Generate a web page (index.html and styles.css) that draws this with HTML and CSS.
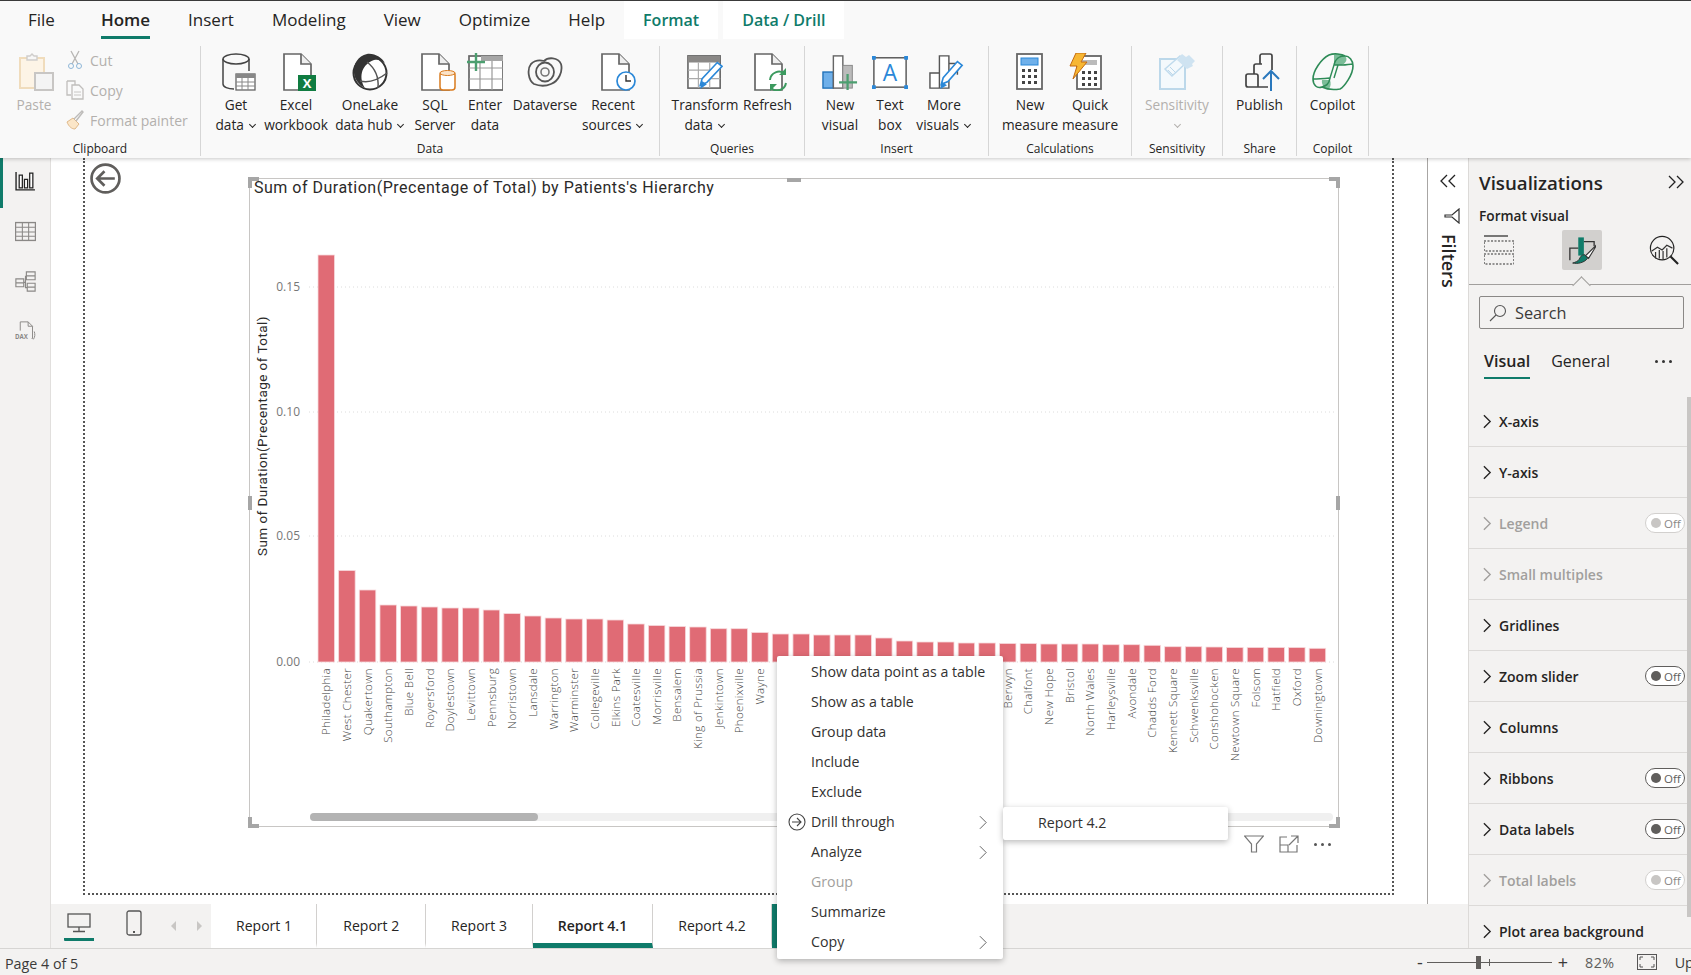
FILE: index.html
```html
<!DOCTYPE html>
<html>
<head>
    <meta charset="UTF-8">
    <title>Report 4.1 - Power BI Desktop</title>
    <link rel="stylesheet" href="styles.css">
</head>
<body>
<header class="ribbon">
    <nav class="tabs">
        <a class="tab tab-file">File</a>
        <a class="tab active">Home</a>
        <a class="tab">Insert</a>
        <a class="tab">Modeling</a>
        <a class="tab">View</a>
        <a class="tab">Optimize</a>
        <a class="tab">Help</a>
        <a class="tab ctx">Format</a>
        <a class="tab ctx ctx-drill">Data / Drill</a>
    </nav>
    <div class="groups">
        <section class="group g-clip">
            <div class="items clip-items">
                <div class="tool off">
                    <svg class="ico nudge" viewBox="0 0 36 38"><rect x="1" y="5" width="24" height="30" fill="#fdf4e6" stroke="#f0dcbc" stroke-width="2"/><path d="M8 5V3h3l2-2 2 2h3v4H8z" fill="#f7f7f7" stroke="#cfcdcb" stroke-width="1.4"/><rect x="16" y="20" width="18" height="17" fill="#f4f4f4" stroke="#c8c6c4" stroke-width="2"/></svg>
                    <span class="lbl">Paste</span>
                </div>
                <div class="mini">
                    <div class="mini-row off"><svg class="ico-s" viewBox="0 0 18 20"><path d="M5 1l7 13M13 1L6 14" fill="none" stroke="#b8b6b4" stroke-width="1.3"/><circle cx="5" cy="16" r="2.5" fill="none" stroke="#8fb7d8"/><circle cx="13" cy="16" r="2.5" fill="none" stroke="#8fb7d8"/></svg>Cut</div>
                    <div class="mini-row off"><svg class="ico-s" viewBox="0 0 18 20"><path d="M1 1h8v4M1 1v14h4" fill="none" stroke="#c0bebc" stroke-width="1.3"/><path d="M6 5h7l4 4v10H6z" fill="none" stroke="#c0bebc" stroke-width="1.3"/><path d="M8 12h7M8 15h7" stroke="#c8c6c4"/></svg>Copy</div>
                    <div class="mini-row off"><svg class="ico-s" viewBox="0 0 18 20"><path d="M1 12l6-4 6 6-4 5c-3 0-6-2-8-7z" fill="#fbe6c8" stroke="#e0b98a"/><path d="M8 9l8-8 1 1-7 9" fill="none" stroke="#bdbbb9" stroke-width="1.4"/></svg>Format painter</div>
                </div>
            </div>
            <div class="group-name">Clipboard</div>
        </section>
        <section class="group g-data">
            <div class="items data-items">
                <div class="tool">
                    <svg class="ico nudge" viewBox="0 0 36 38"><path d="M2 6v25c0 3 5 5 11 5M28 6v12" fill="none" stroke="#444" stroke-width="1.5"/><ellipse cx="15" cy="6" rx="13" ry="5" fill="none" stroke="#444" stroke-width="1.5"/><rect x="15" y="21" width="19" height="16" fill="#fff" stroke="#666" stroke-width="1.3"/><path d="M15 21h19v4H15z" fill="#888"/><path d="M15 29h19M15 33h19M21 25v12M27 25v12" stroke="#888"/></svg>
                    <span class="lbl">Get<br>data <i class="caret"></i></span>
                </div>
                <div class="tool">
                    <svg class="ico nudge" viewBox="0 0 36 38"><path d="M3 1h17l10 10v26H3z" fill="#fff" stroke="#666" stroke-width="1.7"/><path d="M20 1v10h10" fill="#eee" stroke="#666" stroke-width="1.7"/><rect x="17" y="22" width="18" height="16" fill="#107c41"/><text class="ico-x" x="26" y="35">X</text></svg>
                    <span class="lbl">Excel<br>workbook</span>
                </div>
                <div class="tool">
                    <svg class="ico" viewBox="0 0 36 38"><circle cx="18" cy="20" r="16.500" fill="#fff" stroke="#333" stroke-width="2"/><path d="M15 1c-9 2-14 10-13 19 1 7 5 12 11 15C7 26 8 12 22 7c4-1 8 0 11 3-3-5-10-10-18-9z" fill="#333"/><path d="M15 9c9 7 12 15 11 26M8 28c8 2 18-1 27-8" fill="none" stroke="#555" stroke-width="1.500"/></svg>
                    <span class="lbl">OneLake<br>data hub <i class="caret"></i></span>
                </div>
                <div class="tool">
                    <svg class="ico nudge" viewBox="0 0 36 38"><path d="M2 1h17l10 10v26H2z" fill="#fff" stroke="#666" stroke-width="1.7"/><path d="M19 1v10h10" fill="#eee" stroke="#666" stroke-width="1.7"/><rect x="20" y="19" width="15" height="18" rx="3" fill="#fff" stroke="#d97b1e" stroke-width="1.5"/><ellipse cx="27.500" cy="20" rx="7.500" ry="2.500" fill="#fbe3c8" stroke="#d97b1e"/></svg>
                    <span class="lbl">SQL<br>Server</span>
                </div>
                <div class="tool">
                    <svg class="ico" viewBox="0 0 36 38"><rect x="2" y="3" width="34" height="34" fill="#fff" stroke="#666" stroke-width="1.7"/><path d="M14 3h22v5H14z" fill="#a6a6a6"/><path d="M2 15h34M2 26h34M13 8v29M25 8v29" stroke="#999" stroke-width="1.2"/><path d="M9 0v18M0 9h18" stroke="#4c9f70" stroke-width="2.4"/></svg>
                    <span class="lbl">Enter<br>data</span>
                </div>
                <div class="tool">
                    <svg class="ico" viewBox="0 0 36 38"><path d="M7 31C1 27 0 16 4 11c4-4 9-4 13-3 4-4 14-4 17 3 2 7-2 17-10 20-7 3-12 2-17 0z" fill="none" stroke="#555" stroke-width="1.800"/><ellipse cx="18" cy="19" rx="9" ry="9.500" fill="none" stroke="#555" stroke-width="1.800"/><ellipse cx="18" cy="19" rx="4" ry="4" fill="none" stroke="#777" stroke-width="1.600"/></svg>
                    <span class="lbl">Dataverse</span>
                </div>
                <div class="tool">
                    <svg class="ico nudge-far" viewBox="0 0 36 38"><path d="M2 1h17l10 10v26H2z" fill="#fff" stroke="#666" stroke-width="1.7"/><path d="M19 1v10h10" fill="#eee" stroke="#666" stroke-width="1.7"/><circle cx="26" cy="28" r="9" fill="#fff" stroke="#2b88d8" stroke-width="1.7"/><path d="M26 22v6h5" fill="none" stroke="#333" stroke-width="1.4"/></svg>
                    <span class="lbl">Recent<br>sources <i class="caret"></i></span>
                </div>
            </div>
            <div class="group-name">Data</div>
        </section>
        <section class="group g-queries">
            <div class="items query-items">
                <div class="tool">
                    <svg class="ico" viewBox="0 0 38 38"><rect x="1" y="2" width="34" height="34" fill="#fff" stroke="#666" stroke-width="1.7"/><path d="M1 2h34v7H1z" fill="#8a8886"/><path d="M1 17h34M1 26h34M12 9v27M24 9v27" stroke="#aaa" stroke-width="1.2"/><path d="M14 33l2-7 16-17 5 4-16 17z" fill="#fff" stroke="#2b88d8" stroke-width="1.7"/><path d="M14 37l1-9 6 4z" fill="#2b88d8"/></svg>
                    <span class="lbl">Transform<br>data <i class="caret"></i></span>
                </div>
                <div class="tool">
                    <svg class="ico nudge" viewBox="0 0 36 38"><path d="M2 1h17l10 10v26H2z" fill="#fff" stroke="#666" stroke-width="1.7"/><path d="M19 1v10h10" fill="#eee" stroke="#666" stroke-width="1.7"/><path d="M17 27a9 9 0 0 1 15-6M33 30a9 9 0 0 1-15 5" fill="none" stroke="#3c9a5f" stroke-width="2"/><path d="M33 15v7h-7zM17 38v-7h7z" fill="#3c9a5f"/></svg>
                    <span class="lbl">Refresh</span>
                </div>
            </div>
            <div class="group-name">Queries</div>
        </section>
        <section class="group g-insert">
            <div class="items insert-items">
                <div class="tool">
                    <svg class="ico" viewBox="0 0 38 38"><rect x="1" y="19" width="11" height="17" fill="#6fb0ea" stroke="#1c6fb8" stroke-width="1.4"/><rect x="12" y="2" width="10" height="34" fill="#fff" stroke="#666" stroke-width="1.5"/><rect x="22" y="12" width="10" height="24" fill="#bbb" stroke="#888"/><path d="M27 21v17M18 30h19" stroke="#4c9f70" stroke-width="2.4"/></svg>
                    <span class="lbl">New<br>visual</span>
                </div>
                <div class="tool">
                    <svg class="ico" viewBox="0 0 38 38"><rect x="2" y="4" width="34" height="31" fill="#fff" stroke="#555" stroke-width="1.5"/><text class="ico-a" x="19" y="28">A</text><path d="M0 2h4v4H0zM34 2h4v4h-4zM0 33h4v4H0zM34 33h4v4h-4z" fill="#2b88d8"/></svg>
                    <span class="lbl">Text<br>box</span>
                </div>
                <div class="tool">
                    <svg class="ico nudge" viewBox="0 0 38 38"><path d="M1 20h10v16H1zM11 2h10v34H11zM21 10h9v12" fill="#fff" stroke="#555" stroke-width="1.5"/><path d="M13 32l2-7 15-17 5 4-15 17z" fill="#fff" stroke="#2b88d8" stroke-width="1.7"/><path d="M12 37l1-8 6 4z" fill="#2b88d8"/></svg>
                    <span class="lbl">More<br>visuals <i class="caret"></i></span>
                </div>
            </div>
            <div class="group-name">Insert</div>
        </section>
        <section class="group g-calc">
            <div class="items calc-items">
                <div class="tool">
                    <svg class="ico" viewBox="0 0 30 38"><rect x="2" y="1" width="25" height="35" fill="#fff" stroke="#666" stroke-width="1.8"/><rect x="6" y="5" width="17" height="7" fill="#6fb0ea" stroke="#2b88d8"/><path d="M7 16h3v3H7zM13 16h3v3h-3zM19 16h3v3h-3zM7 22h3v3H7zM13 22h3v3h-3zM19 22h3v3h-3zM7 28h3v3H7zM13 28h3v3h-3zM19 28h3v3h-3z" fill="#444"/></svg>
                    <span class="lbl">New<br>measure</span>
                </div>
                <div class="tool">
                    <svg class="ico nudge-left" viewBox="0 0 34 38"><rect x="8" y="3" width="24" height="33" fill="#fff" stroke="#666" stroke-width="1.8"/><rect x="13" y="7" width="15" height="5" fill="#bbb"/><path d="M13 18h3v3h-3zM19 18h3v3h-3zM25 18h3v3h-3zM13 24h3v3h-3zM19 24h3v3h-3zM25 24h3v3h-3zM13 30h3v3h-3zM19 30h3v3h-3zM25 30h3v3h-3z" fill="#444"/><path d="M7 0h10l-5 9h6L4 26l4-13H1z" fill="#f7b733" stroke="#c46a10"/></svg>
                    <span class="lbl">Quick<br>measure</span>
                </div>
            </div>
            <div class="group-name">Calculations</div>
        </section>
        <section class="group g-sens">
            <div class="items sens-items">
                <div class="tool off">
                    <svg class="ico" viewBox="0 0 36 38"><path d="M1 6h25v30H1z" fill="#f4f9fc" stroke="#bcd8ea" stroke-width="2"/><path d="M6 16l7 7 15-14-7-6z" fill="#f4f9fc" stroke="#c0dbed" stroke-width="1.500"/><path d="M23 1l4 3 3-2 6 6-3 3 1 2-6 3-10-9z" fill="#cfe3f1"/><path d="M9 17l5 5M11 14l6 6" stroke="#bcd8ea"/></svg>
                    <span class="lbl">Sensitivity<br><i class="caret"></i></span>
                </div>
            </div>
            <div class="group-name">Sensitivity</div>
        </section>
        <section class="group g-share">
            <div class="items share-items">
                <div class="tool">
                    <svg class="ico nudge" viewBox="0 0 36 38"><path d="M3 21h8a2 2 0 0 1 2 2v11H3a2 2 0 0 1-2-2v-9a2 2 0 0 1 2-2zM9 21v-8a2 2 0 0 1 2-2h6M15 11V3a2 2 0 0 1 2-2h8a2 2 0 0 1 2 2v14M13 34h10" fill="none" stroke="#444" stroke-width="1.700"/><path d="M26 38V19M18 26l8-8 8 8" fill="none" stroke="#2a78bd" stroke-width="2"/></svg>
                    <span class="lbl">Publish</span>
                </div>
            </div>
            <div class="group-name">Share</div>
        </section>
        <section class="group g-copilot">
            <div class="items copilot-items">
                <div class="tool">
                    <svg class="ico ico-wide" viewBox="0 0 42 38"><path d="M22 2c4-2 9-1 11 1 3 3 1 7-3 9h-8z" fill="#7bbd98"/><path d="M10 27h8c1 3 1 6-1 9-4 0-8-4-7-9z" fill="#7bbd98"/><path d="M17 2C9 6 1 18 1 26c0 6 4 10 9 8 4 2 12 3 18 2 4-2 13-14 13-23 0-6-4-10-8-10-3-2-11-3-16-1zM33 3c-3 0-9 0-11 9M10 34c3-1 7-2 8-9M22 12h9c3 0 7-1 10-1M1 26c3 0 6 0 17-1" fill="none" stroke="#2e8b57" stroke-width="1.600"/><path d="M22 12l-4 13M26 12l-4 13" fill="none" stroke="#2e8b57" stroke-width="1.400"/></svg>
                    <span class="lbl">Copilot</span>
                </div>
            </div>
            <div class="group-name">Copilot</div>
        </section>
    </div>
</header>

<main class="main">
    <aside class="rail">
        <div class="rail-btn current"><svg viewBox="0 0 20 20"><path d="M1 1v17h18" fill="none" stroke="#222" stroke-width="1.3"/><path d="M4 4h3v12H4zM9 8h3v8H9zM14 2h3v14h-3z" fill="#fff" stroke="#222" stroke-width="1.2"/></svg></div>
        <div class="rail-btn"><svg viewBox="0 0 20 20"><rect x="0.5" y="1.5" width="19" height="17" fill="none" stroke="#8a8886" stroke-width="1.3"/><path d="M1 6h18M1 10.5h18M1 14.5h18M7 1.5v17M13 1.5v17" stroke="#8a8886"/></svg></div>
        <div class="rail-btn"><svg viewBox="0 0 24 24"><path d="M1 9h9v9H1zM1 13.500h9M13 1h10v9H13zM13 5.500h10M14 14h9v9h-9zM14 18.500h9M10 13h2V6h1M12 13v6h2" fill="none" stroke="#8a8886" stroke-width="1.3"/></svg></div>
        <div class="rail-btn"><svg viewBox="0 0 24 24"><path d="M6 11V1h9l5 5v14h-1M15 1v5h5M22 12c1 3 1 6-1 9" fill="none" stroke="#8a8886" stroke-width="1.1"/><text class="ico-dax" x="0" y="21">DAX</text></svg></div>
    </aside>

    <div class="center">
        <div class="work">
            <div class="canvas">
                <div class="page">
                    <svg class="back" viewBox="0 0 30 30"><circle cx="15" cy="15" r="13.500" fill="#fff" stroke="#605e5c" stroke-width="2.6"/><path d="M24 15H7M14 8l-7 7 7 7" fill="none" stroke="#605e5c" stroke-width="2.6"/></svg>
                    <div class="visual">
                        <svg class="chart" viewBox="0 0 1089 648">
                            <g class="grid">
                                <line x1="60" y1="109" x2="1086" y2="109"/>
                                <line x1="60" y1="234" x2="1086" y2="234"/>
                                <line x1="60" y1="358" x2="1086" y2="358"/>
                                <line x1="60" y1="484" x2="1086" y2="484"/>
                            </g>
                            <g class="ticks">
                                <text x="51" y="113">0.15</text>
                                <text x="51" y="238">0.10</text>
                                <text x="51" y="362">0.05</text>
                                <text x="51" y="488">0.00</text>
                            </g>
                            <text class="ytitle" transform="translate(18,258) rotate(-90)">Sum of Duration(Precentage of Total)</text>
                            <g class="bars">
                                <rect x="69" y="77" width="16.500" height="407"/>
                                <rect x="89.650" y="392.500" width="16.500" height="91.500"/>
                                <rect x="110.300" y="412" width="16.500" height="72"/>
                                <rect x="130.950" y="427" width="16.500" height="57"/>
                                <rect x="151.600" y="428" width="16.500" height="56"/>
                                <rect x="172.250" y="429" width="16.500" height="55"/>
                                <rect x="192.900" y="430" width="16.500" height="54"/>
                                <rect x="213.550" y="430" width="16.500" height="54"/>
                                <rect x="234.200" y="432" width="16.500" height="52"/>
                                <rect x="254.850" y="435.600" width="16.500" height="48.400"/>
                                <rect x="275.500" y="438" width="16.500" height="46"/>
                                <rect x="296.150" y="440" width="16.500" height="44"/>
                                <rect x="316.800" y="441" width="16.500" height="43"/>
                                <rect x="337.450" y="441" width="16.500" height="43"/>
                                <rect x="358.100" y="442" width="16.500" height="42"/>
                                <rect x="378.750" y="446" width="16.500" height="38"/>
                                <rect x="399.400" y="447.500" width="16.500" height="36.500"/>
                                <rect x="420.050" y="448.500" width="16.500" height="35.500"/>
                                <rect x="440.700" y="449" width="16.500" height="35"/>
                                <rect x="461.350" y="450.700" width="16.500" height="33.300"/>
                                <rect x="482" y="450.700" width="16.500" height="33.300"/>
                                <rect x="502.650" y="454.500" width="16.500" height="29.500"/>
                                <rect x="523.300" y="456" width="16.500" height="28"/>
                                <rect x="543.950" y="456" width="16.500" height="28"/>
                                <rect x="564.600" y="457" width="16.500" height="27"/>
                                <rect x="585.250" y="457" width="16.500" height="27"/>
                                <rect x="605.900" y="457" width="16.500" height="27"/>
                                <rect x="626.550" y="460" width="16.500" height="24"/>
                                <rect x="647.200" y="463" width="16.500" height="21"/>
                                <rect x="667.850" y="464" width="16.500" height="20"/>
                                <rect x="688.500" y="464" width="16.500" height="20"/>
                                <rect x="709.150" y="465" width="16.500" height="19"/>
                                <rect x="729.800" y="465" width="16.500" height="19"/>
                                <rect x="750.450" y="465.500" width="16.500" height="18.500"/>
                                <rect x="771.100" y="465.500" width="16.500" height="18.500"/>
                                <rect x="791.750" y="466" width="16.500" height="18"/>
                                <rect x="812.400" y="466" width="16.500" height="18"/>
                                <rect x="833.050" y="466" width="16.500" height="18"/>
                                <rect x="853.700" y="466.700" width="16.500" height="17.300"/>
                                <rect x="874.350" y="466.700" width="16.500" height="17.300"/>
                                <rect x="895" y="467.300" width="16.500" height="16.700"/>
                                <rect x="915.650" y="468.700" width="16.500" height="15.300"/>
                                <rect x="936.300" y="468.700" width="16.500" height="15.300"/>
                                <rect x="956.950" y="469" width="16.500" height="15"/>
                                <rect x="977.600" y="469.500" width="16.500" height="14.500"/>
                                <rect x="998.250" y="469.500" width="16.500" height="14.500"/>
                                <rect x="1018.900" y="469.500" width="16.500" height="14.500"/>
                                <rect x="1039.550" y="469.500" width="16.500" height="14.500"/>
                                <rect x="1060.200" y="470.300" width="16.500" height="13.700"/>
                            </g>
                            <g class="xlabels">
                                <text transform="translate(81,490) rotate(-90)">Philadelphia</text>
                                <text transform="translate(102,490) rotate(-90)">West Chester</text>
                                <text transform="translate(122.500,490) rotate(-90)">Quakertown</text>
                                <text transform="translate(143,490) rotate(-90)">Southampton</text>
                                <text transform="translate(164,490) rotate(-90)">Blue Bell</text>
                                <text transform="translate(184.500,490) rotate(-90)">Royersford</text>
                                <text transform="translate(205,490) rotate(-90)">Doylestown</text>
                                <text transform="translate(226,490) rotate(-90)">Levittown</text>
                                <text transform="translate(246.500,490) rotate(-90)">Pennsburg</text>
                                <text transform="translate(267,490) rotate(-90)">Norristown</text>
                                <text transform="translate(288,490) rotate(-90)">Lansdale</text>
                                <text transform="translate(308.500,490) rotate(-90)">Warrington</text>
                                <text transform="translate(329,490) rotate(-90)">Warminster</text>
                                <text transform="translate(350,490) rotate(-90)">Collegeville</text>
                                <text transform="translate(370.500,490) rotate(-90)">Elkins Park</text>
                                <text transform="translate(391,490) rotate(-90)">Coatesville</text>
                                <text transform="translate(411.500,490) rotate(-90)">Morrisville</text>
                                <text transform="translate(432,490) rotate(-90)">Bensalem</text>
                                <text transform="translate(453,490) rotate(-90)">King of Prussia</text>
                                <text transform="translate(473.500,490) rotate(-90)">Jenkintown</text>
                                <text transform="translate(494,490) rotate(-90)">Phoenixville</text>
                                <text transform="translate(515,490) rotate(-90)">Wayne</text>
                                <text transform="translate(762.500,490) rotate(-90)">Berwyn</text>
                                <text transform="translate(783,490) rotate(-90)">Chalfont</text>
                                <text transform="translate(804,490) rotate(-90)">New Hope</text>
                                <text transform="translate(824.500,490) rotate(-90)">Bristol</text>
                                <text transform="translate(845,490) rotate(-90)">North Wales</text>
                                <text transform="translate(866,490) rotate(-90)">Harleysville</text>
                                <text transform="translate(886.500,490) rotate(-90)">Avondale</text>
                                <text transform="translate(907,490) rotate(-90)">Chadds Ford</text>
                                <text transform="translate(928,490) rotate(-90)">Kennett Square</text>
                                <text transform="translate(948.500,490) rotate(-90)">Schwenksville</text>
                                <text transform="translate(969,490) rotate(-90)">Conshohocken</text>
                                <text transform="translate(990,490) rotate(-90)">Newtown Square</text>
                                <text transform="translate(1010.500,490) rotate(-90)">Folsom</text>
                                <text transform="translate(1031,490) rotate(-90)">Hatfield</text>
                                <text transform="translate(1052,490) rotate(-90)">Oxford</text>
                                <text transform="translate(1072.500,490) rotate(-90)">Downingtown</text>
                            </g>
                            <rect class="sb-track" x="61" y="635" width="1023" height="8" rx="4"/>
                            <rect class="sb-thumb" x="61" y="635" width="228" height="8" rx="4"/>
                        </svg>
                        <div class="visual-title">Sum of Duration(Precentage of Total) by Patients's Hierarchy</div>
                        <i class="corner tl"></i><i class="corner tr"></i><i class="corner bl"></i><i class="corner br"></i>
                        <i class="grip grip-top"></i><i class="grip grip-left"></i><i class="grip grip-right"></i>
                        <div class="visual-tools">
                            <svg viewBox="0 0 20 18"><path d="M0.500 1h19l-7 8v8h-5V9z" fill="none" stroke="#777" stroke-width="1.2"/></svg>
                            <svg viewBox="0 0 20 18"><path d="M8 2H1v15h17v-7M1 10h8v7M12 1h7v7M19 1l-9 9" fill="none" stroke="#777" stroke-width="1.2"/></svg>
                            <span class="dots"><i></i><i></i><i></i></span>
                        </div>
                    </div>
                </div>
            </div>
            <aside class="filters">
                <svg class="dbl" viewBox="0 0 16 14"><path d="M7 1L1 7l6 6M15 1L9 7l6 6" fill="none" stroke="#222" stroke-width="1.3"/></svg>
                <svg class="funnel" viewBox="0 0 16 16"><path d="M15 1v14L8 9H1V7h7z" fill="none" stroke="#333" stroke-width="1.2"/></svg>
                <div class="filters-label">Filters</div>
            </aside>
        </div>
        <div class="pagebar">
            <div class="view-icons">
                <div class="vi vi-desk"><svg viewBox="0 0 24 20"><rect x="1" y="1" width="22" height="13" fill="none" stroke="#555" stroke-width="1.3"/><path d="M12 14v4M6 18.500h12" stroke="#555" stroke-width="1.3"/></svg></div>
                <div class="vi vi-phone"><svg viewBox="0 0 16 26"><rect x="1" y="1" width="14" height="24" rx="2" fill="none" stroke="#555" stroke-width="1.3"/><path d="M7 21h2v2H7z" fill="#555"/></svg></div>
                <i class="arr arr-l"></i><i class="arr arr-r"></i>
            </div>
            <div class="pages">
                <a class="pg">Report 1</a>
                <a class="pg">Report 2</a>
                <a class="pg">Report 3</a>
                <a class="pg cur">Report 4.1</a>
                <a class="pg">Report 4.2</a>
                <a class="pg pg-drill"></a>
            </div>
        </div>
    </div>

    <aside class="viz">
        <div class="viz-head">
            <h2>Visualizations</h2>
            <svg class="dbl" viewBox="0 0 16 14"><path d="M1 1l6 6-6 6M9 1l6 6-6 6" fill="none" stroke="#222" stroke-width="1.3"/></svg>
        </div>
        <div class="viz-sub">Format visual</div>
        <div class="viz-modes">
            <svg class="mode" viewBox="0 0 30 30"><path d="M0 1h24" stroke="#333" stroke-width="1.3"/><path d="M0 6h30v10H0zM0 19h30v10H0z" fill="none" stroke="#333" stroke-width="1.2" stroke-dasharray="2 1.500"/></svg>
            <div class="mode-on"><svg viewBox="0 0 30 30"><path d="M11 1.500h6V21h-6z" fill="#107c6a"/><path d="M2 26V13h9M17 6h11v5" fill="none" stroke="#333" stroke-width="1.4"/><path d="M30 10L19 21l3 3 8-13z" fill="#fff" stroke="#333" stroke-width="1.2"/><path d="M5 29c5 1 12 0 16-5l-3-4c-4 0-5 3-6 5-1 2-4 3-7 4z" fill="#107c6a" stroke="#333"/></svg></div>
            <svg class="mode" viewBox="0 0 32 32"><circle cx="14" cy="14" r="12.500" fill="none" stroke="#222" stroke-width="1.3"/><path d="M3 17l6-4 5 3 5-5 6 3" fill="none" stroke="#333" stroke-width="1.3"/><path d="M7 18v7M11 16v9M15 17v9M19 14v10" stroke="#333" stroke-width="1.3"/><path d="M23 23l8 8" stroke="#222" stroke-width="2.2"/></svg>
        </div>
        <div class="notch"></div>
        <div class="viz-search">
            <svg viewBox="0 0 18 18"><circle cx="11" cy="7" r="5.500" fill="none" stroke="#555" stroke-width="1.1"/><path d="M7 11l-6 6" stroke="#555" stroke-width="1.1"/></svg>
            <span>Search</span>
        </div>
        <div class="viz-tabs">
            <a class="vt on">Visual</a>
            <a class="vt">General</a>
            <span class="vt-more"><i></i><i></i><i></i></span>
        </div>
        <div class="cards">
            <div class="card"><svg class="chev" viewBox="0 0 10 16"><path d="M1 1l7 7-7 7"/></svg>X-axis</div>
            <div class="card"><svg class="chev" viewBox="0 0 10 16"><path d="M1 1l7 7-7 7"/></svg>Y-axis</div>
            <div class="card dim"><svg class="chev" viewBox="0 0 10 16"><path d="M1 1l7 7-7 7"/></svg>Legend<span class="toggle"><i></i>Off</span></div>
            <div class="card dim"><svg class="chev" viewBox="0 0 10 16"><path d="M1 1l7 7-7 7"/></svg>Small multiples</div>
            <div class="card"><svg class="chev" viewBox="0 0 10 16"><path d="M1 1l7 7-7 7"/></svg>Gridlines</div>
            <div class="card"><svg class="chev" viewBox="0 0 10 16"><path d="M1 1l7 7-7 7"/></svg>Zoom slider<span class="toggle"><i></i>Off</span></div>
            <div class="card"><svg class="chev" viewBox="0 0 10 16"><path d="M1 1l7 7-7 7"/></svg>Columns</div>
            <div class="card"><svg class="chev" viewBox="0 0 10 16"><path d="M1 1l7 7-7 7"/></svg>Ribbons<span class="toggle"><i></i>Off</span></div>
            <div class="card"><svg class="chev" viewBox="0 0 10 16"><path d="M1 1l7 7-7 7"/></svg>Data labels<span class="toggle"><i></i>Off</span></div>
            <div class="card dim"><svg class="chev" viewBox="0 0 10 16"><path d="M1 1l7 7-7 7"/></svg>Total labels<span class="toggle"><i></i>Off</span></div>
            <div class="card"><svg class="chev" viewBox="0 0 10 16"><path d="M1 1l7 7-7 7"/></svg>Plot area background</div>
        </div>
        <div class="viz-scroll"></div>
    </aside>
</main>

<footer class="status">
    <span class="page-of">Page 4 of 5</span>
    <div class="zoom">
        <span class="zm">-</span>
        <div class="slider"><i class="thumb"></i><i class="mid"></i></div>
        <span class="zm">+</span>
        <span class="pct">82%</span>
        <svg class="fit" viewBox="0 0 20 16"><rect x="0.500" y="0.500" width="19" height="15" fill="none" stroke="#555"/><path d="M3 6V3h3M14 3h3v3M17 10v3h-3M6 13H3v-3" fill="none" stroke="#555"/></svg>
        <span class="up">Up</span>
    </div>
</footer>

<div class="menu">
    <div class="mi">Show data point as a table</div>
    <div class="mi">Show as a table</div>
    <div class="mi">Group data</div>
    <div class="mi">Include</div>
    <div class="mi">Exclude</div>
    <div class="mi"><svg class="mi-ico" viewBox="0 0 18 18"><circle cx="9" cy="9" r="8" fill="none" stroke="#444" stroke-width="1.1"/><path d="M4 9h9M9 5l4 4-4 4" fill="none" stroke="#444" stroke-width="1.1"/></svg>Drill through<svg class="mi-chev" viewBox="0 0 10 16"><path d="M1 1l7 7-7 7"/></svg></div>
    <div class="mi">Analyze<svg class="mi-chev" viewBox="0 0 10 16"><path d="M1 1l7 7-7 7"/></svg></div>
    <div class="mi dis">Group</div>
    <div class="mi">Summarize</div>
    <div class="mi">Copy<svg class="mi-chev" viewBox="0 0 10 16"><path d="M1 1l7 7-7 7"/></svg></div>
</div>
<div class="submenu">Report 4.2</div>
</body>
</html>
```

FILE: styles.css
```css
* {
    margin: 0;
    padding: 0;
    box-sizing: border-box;
}
body {
    width: 1691px;
    height: 975px;
    overflow: hidden;
    display: flex;
    flex-direction: column;
    font-family: "Open Sans", "Noto Sans", sans-serif;
    color: #252423;
    background: #f3f2f1;
    position: relative;
}

/* ribbon */
.ribbon {
    height: 158px;
    flex: none;
    background: #f9f9f9;
    border-top: 1px solid #3a3a3a;
    box-shadow: 0 1px 4px rgba(0,0,0,.22);
    position: relative;
    z-index: 3;
}
.tabs {
    display: flex;
    height: 38px;
    padding-left: 9px;
}
.tab {
    padding: 2px 19px 0;
    font-size: 17px;
    line-height: 34px;
    white-space: nowrap;
}
.tab-file {
    margin-right: 8px;
}
.tab.active {
    font-weight: 600;
    position: relative;
}
.tab.active:after {
    content: "";
    position: absolute;
    left: 19px;
    right: 19px;
    bottom: 0;
    height: 3px;
    background: #0f7b6a;
}
.tab.ctx {
    background: #fff;
    color: #0f7b6a;
    font-weight: 600;
    font-size: 16px;
}
.ctx-drill {
    margin-left: 5px;
}
.groups {
    display: flex;
    margin-top: 7px;
    height: 110px;
}
.group {
    border-right: 1px solid #d6d6d6;
    display: flex;
    flex-direction: column;
}
.g-clip { width: 201px; }
.g-data { width: 459px; }
.g-queries { width: 145px; }
.g-insert { width: 184px; }
.g-calc { width: 143px; }
.g-sens { width: 91px; }
.g-share { width: 74px; }
.g-copilot { width: 72px; }
.items {
    display: grid;
    height: 96px;
}
.clip-items { grid-template-columns: 64px 1fr; padding-left: 2px; }
.data-items { grid-template-columns: 60px 60px 88px 42px 58px 62px 74px; padding-left: 5px; }
.query-items { grid-template-columns: 90px 35px; }
.insert-items { grid-template-columns: 70px 30px 78px; }
.calc-items { grid-template-columns: 82px 38px; }
.sens-items, .share-items, .copilot-items { grid-template-columns: 1fr; }
.tool {
    display: flex;
    flex-direction: column;
    align-items: center;
    padding-top: 7px;
    font-size: 13.700px;
    line-height: 20px;
    white-space: nowrap;
}
.ico {
    width: 36px;
    height: 38px;
    margin-bottom: 4px;
    flex: none;
}
.ico-wide {
    width: 42px;
}
.nudge {
    margin-left: 6px;
}
.nudge-far {
    margin-left: 10px;
}
.nudge-left {
    margin-right: 8px;
}
.lbl {
    text-align: center;
}
.off {
    color: #b3b0ad;
}
.caret {
    display: inline-block;
    width: 5px;
    height: 5px;
    border-right: 1.3px solid currentColor;
    border-bottom: 1.3px solid currentColor;
    transform: rotate(45deg);
    margin: 0 2px 3px 2px;
}
.group-name {
    text-align: center;
    font-size: 12px;
    line-height: 14px;
    margin-top: 1px;
}
.mini {
    margin-top: -1px;
    font-size: 14px;
}
.mini-row {
    display: flex;
    align-items: center;
    height: 30px;
    gap: 6px;
    white-space: nowrap;
}
.ico-s {
    width: 18px;
    height: 20px;
    flex: none;
}
.ico-x, .ico-a, .ico-dax {
    font-family: "Open Sans", sans-serif;
    text-anchor: middle;
}
.ico-x {
    fill: #fff;
    font-size: 13px;
    font-weight: 700;
}
.ico-a {
    fill: #2b88d8;
    font-size: 24px;
}
.ico-dax {
    fill: #8a8886;
    font-size: 7px;
    font-weight: 700;
    text-anchor: start;
}

/* main area */
.main {
    flex: 1;
    display: flex;
    min-height: 0;
}
.rail {
    width: 51px;
    flex: none;
    background: #f3f2f1;
    border-right: 1px solid #e1dfdd;
}
.rail-btn {
    height: 50px;
    display: flex;
    align-items: center;
    justify-content: center;
}
.rail-btn svg {
    width: 21px;
    height: 21px;
    margin-top: -3px;
}
.rail-btn.current {
    border-left: 3px solid #0f7b6a;
    padding-right: 3px;
}
.center {
    width: 1417px;
    flex: none;
    display: flex;
    flex-direction: column;
}
.work {
    flex: 1;
    display: flex;
    min-height: 0;
}
.canvas {
    width: 1376px;
    background: #fff;
    padding-left: 32px;
    padding-bottom: 9px;
}
.page {
    width: 1311px;
    height: 100%;
    border: 2px dotted #555;
    border-top: 0;
    position: relative;
}
.back {
    position: absolute;
    left: 5px;
    top: 5px;
    width: 31px;
    height: 31px;
}
.visual {
    position: absolute;
    left: 164px;
    top: 20px;
    width: 1090px;
    height: 649px;
    border: 1.5px solid #c8c6c4;
}
.chart {
    display: block;
    position: absolute;
    left: -1.5px;
    top: -1.5px;
    width: 1089px;
    height: 648px;
    font-family: "Open Sans", sans-serif;
}
.visual-title {
    position: absolute;
    left: 4px;
    top: -1px;
    font: 16px/20px Roboto, sans-serif;
    letter-spacing: .5px;
    color: #2b2a29;
    white-space: nowrap;
}
.grid line {
    stroke: #dcdcdc;
    stroke-dasharray: 1 3;
}
.ticks text {
    font-size: 12px;
    fill: #777;
    text-anchor: end;
}
.ytitle {
    font: 13.500px Roboto, sans-serif;
    letter-spacing: .45px;
    fill: #2b2a29;
    text-anchor: middle;
}
.bars rect {
    fill: #e06b75;
    stroke: #f7d9dc;
    stroke-width: .8;
}
.xlabels text {
    font-size: 11.500px;
    font-weight: 300;
    fill: #444;
    text-anchor: end;
    letter-spacing: .35px;
}
.sb-track {
    fill: #f0f0f0;
}
.sb-thumb {
    fill: #b3b3b3;
}
.corner {
    position: absolute;
    width: 11px;
    height: 11px;
    border: 0 solid #a6a6a6;
}
.corner.tl { left: -2px; top: -2px; border-width: 4px 0 0 4px; }
.corner.tr { right: -2px; top: -2px; border-width: 4px 4px 0 0; }
.corner.bl { left: -2px; bottom: -2px; border-width: 0 0 4px 4px; }
.corner.br { right: -2px; bottom: -2px; border-width: 0 4px 4px 0; }
.grip {
    position: absolute;
    background: #a6a6a6;
}
.grip-top { left: 537px; top: -1px; width: 14px; height: 4px; }
.grip-left { left: -2px; top: 317px; width: 4px; height: 14px; }
.grip-right { right: -2px; top: 317px; width: 4px; height: 14px; }
.visual-tools {
    position: absolute;
    right: 5px;
    bottom: -27px;
    display: flex;
    align-items: center;
    gap: 15px;
}
.visual-tools svg {
    width: 20px;
    height: 18px;
}
.dots {
    display: flex;
    gap: 4px;
    width: 19px;
}
.dots i, .vt-more i {
    display: block;
    width: 3px;
    height: 3px;
    border-radius: 50%;
    background: #555;
}

/* filters strip */
.filters {
    flex: 1;
    background: #fff;
    border-left: 1px solid #a8a6a4;
    position: relative;
    display: flex;
    flex-direction: column;
    align-items: center;
    padding-top: 16px;
}
.filters .dbl {
    width: 16px;
    height: 14px;
}
.filters .funnel {
    width: 16px;
    height: 16px;
    margin: 20px 0 0 8px;
}
.filters-label {
    writing-mode: vertical-rl;
    font-size: 18px;
    font-weight: 600;
    line-height: 20px;
    margin: 10px 0 0 2px;
}

/* page tabs */
.pagebar {
    height: 44px;
    flex: none;
    display: flex;
    background: #f3f2f1;
}
.view-icons {
    width: 160px;
    position: relative;
    display: flex;
    padding-left: 13px;
}
.vi {
    display: flex;
    justify-content: center;
}
.vi-desk {
    width: 30px;
    height: 37px;
    padding-top: 9px;
    border-bottom: 3px solid #0f7b6a;
    border-bottom-left-radius: 1px;
}
.vi-desk svg {
    width: 24px;
    height: 20px;
}
.vi-phone {
    margin-left: 32px;
    padding-top: 6px;
}
.vi-phone svg {
    width: 16px;
    height: 26px;
}
.arr {
    position: absolute;
    top: 17px;
    border: 5px solid transparent;
}
.arr-l { left: 115px; border-right: 5px solid #c8c6c4; }
.arr-r { left: 146px; border-left: 5px solid #c8c6c4; }
.pages {
    display: flex;
    background: #fff;
}
.pg {
    display: flex;
    align-items: center;
    justify-content: center;
    border-right: 1px solid #d2d0ce;
    width: 106px;
    font-size: 14px;
    border-bottom: 5px solid transparent;
    padding: 3px 0 0 1px;
}
.pg:nth-child(2) { width: 108.500px; }
.pg:nth-child(3) { width: 107px; }
.pg.cur {
    width: 120px;
    font-weight: 600;
    border-bottom-color: #0f7b6a;
}
.pg:nth-child(5) { width: 119px; }
.pg-drill {
    width: 20px;
    border: 0;
    border-left: 5px solid #0f7b6a;
    padding: 0;
}

/* visualizations pane */
.viz {
    flex: 1;
    min-width: 0;
    background: #f3f2f1;
    border-left: 1px solid #dcdad8;
    position: relative;
    overflow: hidden;
}
.viz-head {
    display: flex;
    justify-content: space-between;
    align-items: center;
    padding: 10px 7px 0 10px;
    height: 38px;
}
.viz-head h2 {
    font-size: 18.700px;
    font-weight: 600;
    white-space: nowrap;
}
.viz-head .dbl {
    width: 16px;
    height: 14px;
}
.viz-sub {
    font-size: 13.700px;
    font-weight: 600;
    padding-left: 10px;
    margin-top: 10px;
    line-height: 20px;
}
.viz-modes {
    display: flex;
    align-items: center;
    justify-content: space-between;
    width: 195px;
    margin: 4px 0 0 15px;
    height: 40px;
}
.mode {
    width: 30px;
    height: 30px;
}
.mode-on {
    width: 40px;
    height: 40px;
    background: #d2d0ce;
    border-radius: 2px;
    padding: 6px;
}
.mode-on svg {
    width: 28px;
    height: 28px;
    display: block;
}
.notch {
    height: 15px;
    border-bottom: 1px solid #a19f9d;
    position: relative;
}
.notch:after {
    content: "";
    position: absolute;
    left: 106px;
    top: 9px;
    width: 12px;
    height: 12px;
    background: #f3f2f1;
    border-left: 1px solid #a19f9d;
    border-top: 1px solid #a19f9d;
    transform: rotate(45deg);
}
.viz-search {
    width: 205px;
    height: 33px;
    margin: 11px 0 0 10px;
    border: 1px solid #8a8886;
    border-radius: 2px;
    display: flex;
    align-items: center;
    padding-left: 9px;
    gap: 8px;
    font-size: 16.300px;
    color: #3b3a39;
}
.viz-search svg {
    width: 18px;
    height: 18px;
}
.viz-tabs {
    display: flex;
    align-items: flex-start;
    margin: 20px 0 0 15px;
    gap: 21px;
    position: relative;
    height: 36px;
}
.vt {
    font-size: 16px;
    line-height: 24px;
    height: 30px;
}
.vt.on {
    font-weight: 600;
    border-bottom: 2px solid #0f7b6a;
}
.vt-more {
    position: absolute;
    left: 171px;
    top: 11px;
    display: flex;
    gap: 4px;
}
.vt-more i {
    background: #333;
}
.cards {
    margin-top: 11px;
}
.card {
    height: 51px;
    display: flex;
    align-items: center;
    border-bottom: 1px solid #dcdad8;
    padding: 0 6px 0 14px;
    font-size: 14px;
    font-weight: 600;
    white-space: nowrap;
}
.chev {
    width: 9px;
    height: 15px;
    margin-right: 7px;
    flex: none;
    fill: none;
    stroke: #252423;
    stroke-width: 1.500;
}
.card.dim {
    color: #a19f9d;
}
.card.dim .chev {
    stroke: #a19f9d;
}
.toggle {
    margin-left: auto;
    width: 40px;
    height: 20px;
    border: 1px solid #605e5c;
    border-radius: 10px;
    background: #fff;
    display: flex;
    align-items: center;
    gap: 3px;
    padding-left: 5px;
    font-size: 11.500px;
    font-weight: 400;
    color: #605e5c;
    flex: none;
}
.toggle i {
    width: 10px;
    height: 10px;
    border-radius: 50%;
    background: #605e5c;
}
.card.dim .toggle {
    border-color: #d2d0ce;
    color: #8a8886;
}
.card.dim .toggle i {
    background: #c8c6c4;
}
.viz-scroll {
    position: absolute;
    right: 0;
    top: 239px;
    width: 4px;
    height: 520px;
    background: #c8c6c4;
}

/* status bar */
.status {
    height: 27px;
    flex: none;
    border-top: 1px solid #d6d5d3;
    background: #f3f2f1;
    display: flex;
    align-items: center;
    justify-content: space-between;
    padding-left: 5px;
    font-size: 14.300px;
    color: #3b3a39;
    overflow: hidden;
}
.page-of {
    padding-top: 2px;
}
.zoom {
    display: flex;
    align-items: center;
    width: 278px;
    flex: none;
}
.zoom > * {
    flex: none;
}
.zm {
    width: 14px;
    font-size: 18px;
    text-align: center;
}
.slider {
    width: 125px;
    height: 1px;
    background: #605e5c;
    margin-right: 4px;
    position: relative;
}
.thumb {
    position: absolute;
    left: 49px;
    top: -6px;
    width: 5px;
    height: 13px;
    background: #605e5c;
}
.mid {
    position: absolute;
    left: 62px;
    top: -3px;
    width: 1px;
    height: 7px;
    background: #605e5c;
}
.pct {
    margin-left: 15px;
    letter-spacing: .5px;
    color: #605e5c;
}
.fit {
    width: 20px;
    height: 16px;
    margin-left: 22px;
}
.up {
    margin-left: 18px;
}

/* context menu */
.menu {
    position: absolute;
    left: 777px;
    top: 656px;
    width: 226px;
    height: 303px;
    background: #fff;
    padding: 1px 0;
    z-index: 5;
    box-shadow: 0 2px 6px rgba(0,0,0,.28);
    border-radius: 2px;
}
.mi {
    height: 30px;
    line-height: 30px;
    padding-left: 34px;
    font-size: 14.200px;
    color: #323130;
    position: relative;
    white-space: nowrap;
}
.mi.dis {
    color: #a19f9d;
}
.mi-ico {
    position: absolute;
    left: 11px;
    top: 6px;
    width: 18px;
    height: 18px;
}
.mi-chev {
    position: absolute;
    right: 15px;
    top: 8px;
    width: 9px;
    height: 15px;
    fill: none;
    stroke: #555;
    stroke-width: 1;
}
.submenu {
    position: absolute;
    left: 1003px;
    top: 807px;
    width: 225px;
    height: 33px;
    line-height: 32px;
    padding-left: 35px;
    font-size: 14.200px;
    color: #323130;
    background: #fff;
    z-index: 6;
    box-shadow: 0 2px 6px rgba(0,0,0,.28);
    border-radius: 2px;
}
```
